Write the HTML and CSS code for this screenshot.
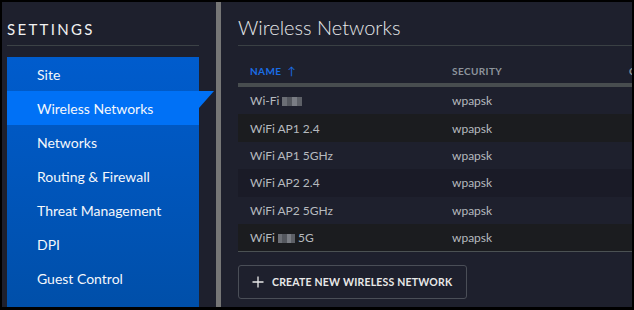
FILE: index.html
```html
<!DOCTYPE html>
<html lang="en-US">
<head>
  <meta charset="UTF-8">
  <title>Settings - Wireless Networks</title>
  <link rel="stylesheet" href="styles.css">
</head>
<body>
  <div class="frame">
    <aside class="sidebar">
      <h2 class="sidebar-title">SETTINGS</h2>
      <ul class="menu">
        <li>Site</li>
        <li class="active">Wireless Networks</li>
        <li>Networks</li>
        <li>Routing &amp; Firewall</li>
        <li>Threat Management</li>
        <li>DPI</li>
        <li>Guest Control</li>
      </ul>
    </aside>
    <div class="divider"></div>
    <main class="main">
      <h1 class="page-title">Wireless Networks</h1>
      <div class="table">
        <div class="row head">
          <div class="cell name sorted">NAME <span class="arrow">&uarr;</span></div>
          <div class="cell sec">SECURITY</div>
          <div class="cell extra">CHANNEL</div>
        </div>
        <div class="row">
          <div class="cell name">Wi-Fi <span class="blur w20"></span></div>
          <div class="cell sec">wpapsk</div>
        </div>
        <div class="row grey">
          <div class="cell name">WiFi AP1 2.4</div>
          <div class="cell sec">wpapsk</div>
        </div>
        <div class="row">
          <div class="cell name">WiFi AP1 5GHz</div>
          <div class="cell sec">wpapsk</div>
        </div>
        <div class="row hover">
          <div class="cell name">WiFi AP2 2.4</div>
          <div class="cell sec">wpapsk</div>
        </div>
        <div class="row">
          <div class="cell name">WiFi AP2 5GHz</div>
          <div class="cell sec">wpapsk</div>
        </div>
        <div class="row grey last">
          <div class="cell name">WiFi <span class="blur w18"></span> 5G</div>
          <div class="cell sec">wpapsk</div>
        </div>
      </div>
      <button class="create">
        <svg width="12" height="12" viewBox="0 0 12 12"><path d="M6 0.5v11M0.5 6h11" stroke="#e8e8e8" stroke-width="1.3" fill="none"/></svg>
        <span>CREATE NEW WIRELESS NETWORK</span>
      </button>
    </main>
  </div>
</body>
</html>
```

FILE: styles.css
```css
html, body {
  margin: 0;
  padding: 0;
  background: #000;
}
body {
  font-family: Lato, "Noto Sans", sans-serif;
  width: 634px;
  height: 310px;
  overflow: hidden;
}
.frame {
  display: flex;
  margin: 2px 2px 0 2px;
  height: 305px;
  background: #1e202d;
  overflow: hidden;
}

/* sidebar */
.sidebar {
  width: 192px;
  padding: 0 17px 0 5px;
  flex: none;
  display: flex;
  flex-direction: column;
}
.sidebar-title {
  margin: 0;
  height: 44px;
  box-sizing: border-box;
  padding-top: 18px;
  font-size: 15px;
  font-weight: 400;
  line-height: 18px;
  letter-spacing: 2.3px;
  color: #f2f2f2;
  border-bottom: 1px solid #3c4246;
}
.menu {
  list-style: none;
  margin: 11px 0 0;
  padding: 0;
  flex: 1;
  background: linear-gradient(#005ccd, #004fa9);
}
.menu li {
  position: relative;
  height: 34px;
  line-height: 35px;
  padding-left: 30px;
  font-size: 14px;
  color: #f4f7fb;
}
.menu li.active {
  background: #0071f6;
}
.menu li.active::after {
  content: "";
  position: absolute;
  top: 0;
  right: -15px;
  width: 15px;
  height: 17px;
  background: #0071f6;
  clip-path: polygon(0 0, 100% 0, 0 100%);
}

.divider {
  width: 5px;
  flex: none;
  background: #767676;
}

/* main */
.main {
  flex: 1;
  padding-left: 17px;
  overflow: hidden;
}
.page-title {
  margin: 0;
  height: 44px;
  box-sizing: border-box;
  padding-top: 13px;
  font-size: 20px;
  line-height: 24px;
  font-weight: 300;
  color: #e6e8ea;
  border-bottom: 1px solid #3a4044;
}
.table {
  width: 540px;
  border-bottom: 1px solid #4b5153;
}
.row {
  display: flex;
  height: 27.4px;
  align-items: center;
  font-size: 12px;
  color: #b6babf;
}
.row.head {
  align-items: flex-end;
  padding-bottom: 6px;
  box-sizing: border-box;
  border-bottom: 4px solid #484d4f;
  height: 41px;
  font-size: 10px;
  font-weight: 700;
  letter-spacing: 0.4px;
  color: #8d949c;
}
.row.grey { background: #1b1c1f; }
.row.hover { background: #1a1b27; }
.cell.name {
  width: 214px;
  padding-left: 12px;
  box-sizing: border-box;
  flex: none;
}
.cell.sec {
  width: 177px;
  flex: none;
}
.sorted { color: #1a6de6; }
.arrow {
  font-weight: 400;
  font-size: 11px;
  margin-left: 3px;
}
.blur {
  display: inline-block;
  height: 9px;
  vertical-align: -1px;
  background: linear-gradient(90deg, #6b6e75 0 25%, #54575e 25% 50%, #7a7d84 50% 75%, #5d6067 75%);
}
.w20 { width: 20px; }
.w18 { width: 17px; }

.create {
  display: flex;
  align-items: center;
  gap: 8px;
  margin-top: 13px;
  width: 229px;
  height: 34px;
  padding: 0 0 0 13px;
  background: transparent;
  border: 1px solid #4a4e57;
  border-radius: 3px;
  font-family: Lato, "Noto Sans", sans-serif;
  font-size: 10.5px;
  font-weight: 700;
  letter-spacing: 0.2px;
  color: #e8e8e8;
  cursor: pointer;
}
```
